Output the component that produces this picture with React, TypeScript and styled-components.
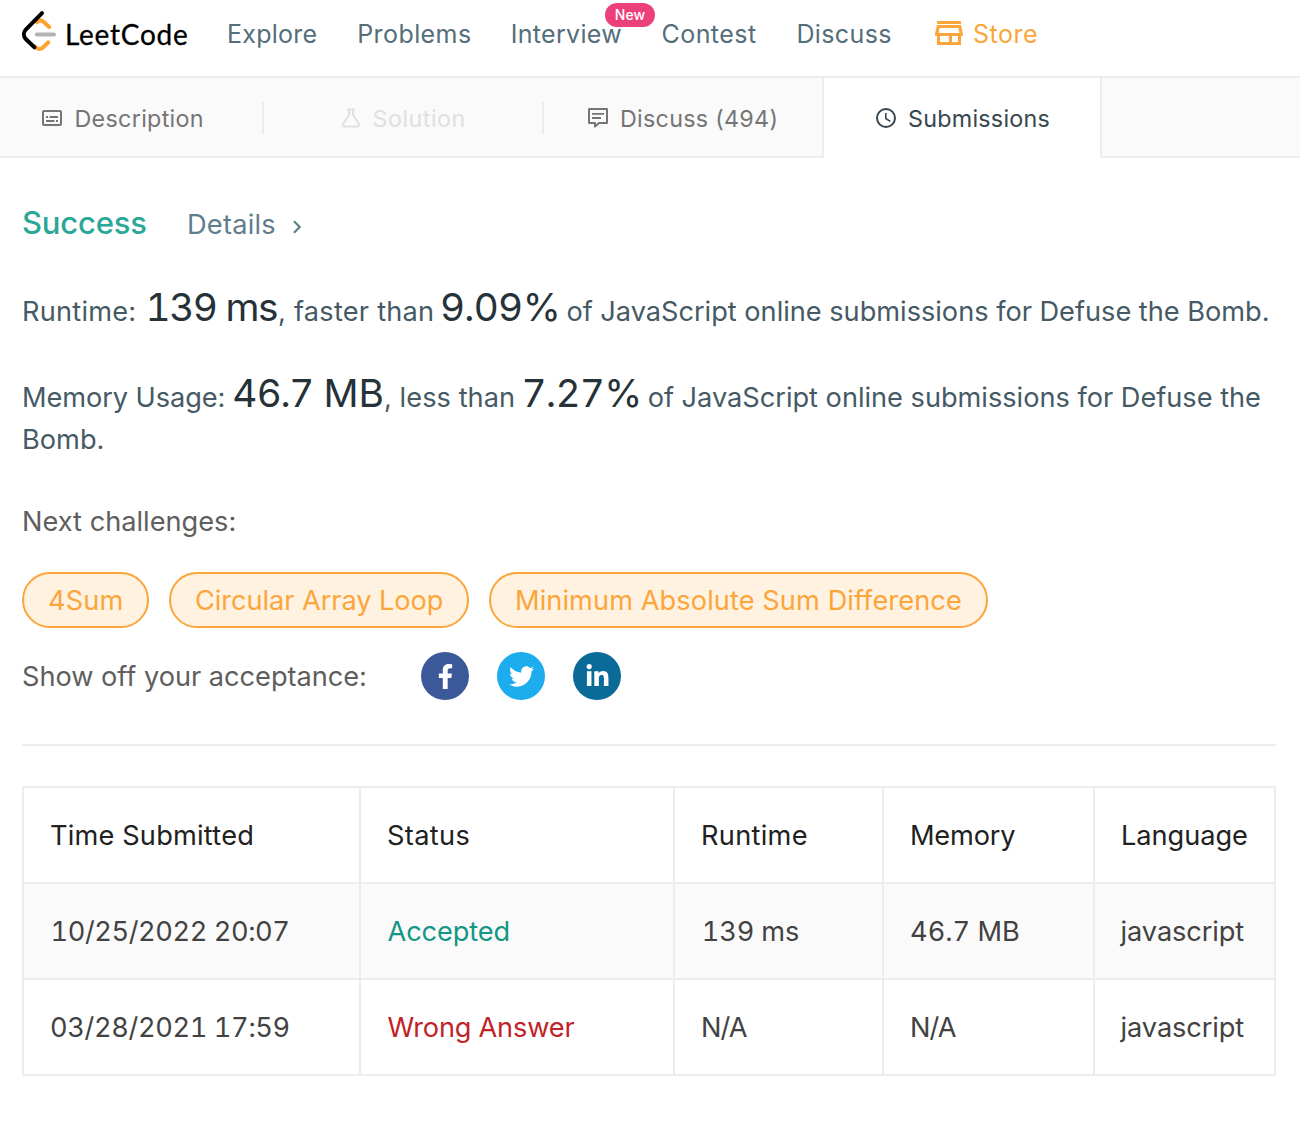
import React from "react";
import styled, { createGlobalStyle } from "styled-components";
import { FaFacebookF, FaLinkedinIn, FaTwitter } from "react-icons/fa";

const line = "#ededed";
const orange = "#fba63b";

const GlobalStyle = createGlobalStyle`
  * { box-sizing: border-box; }
  body {
    margin: 0;
    background: #fff;
    font-family: Inter, "Open Sans", sans-serif;
    font-size: 27.2px;
    line-height: 42px;
    color: #424242;
  }
`;

const Text = styled.span<{ $ls?: number; $shift?: number }>`
  letter-spacing: ${(p) => p.$ls ?? 0}px;
  margin-left: ${(p) => p.$shift ?? 0}px;
`;

/* ---------- header ---------- */

const Header = styled.header`
  display: flex;
  align-items: flex-start;
  height: 78px;
  padding-left: 20px;
  border-bottom: 2px solid ${line};
`;

const Brand = styled.a`
  display: flex;
  align-items: center;
  width: 207px;
  height: 68px;
  gap: 5px;
`;

const Wordmark = styled.span`
  font-family: Lato, sans-serif;
  font-size: 28px;
  letter-spacing: 0.74px;
  color: #000;
  padding-bottom: 1px;
  -webkit-text-stroke: 0.3px #000;
`;

const Nav = styled.nav`
  display: flex;
`;

const NavLink = styled.a<{ $width: number; $ls: number }>`
  position: relative;
  width: ${(p) => p.$width}px;
  font-size: 25px;
  line-height: 68px;
  letter-spacing: ${(p) => p.$ls}px;
  color: #546e7a;
`;

const Badge = styled.span`
  position: absolute;
  left: 94.2px;
  top: 3px;
  width: 50px;
  height: 24px;
  border-radius: 12px;
  background: #ec407a;
  color: #fff;
  font-size: 14px;
  font-weight: 500;
  line-height: 24px;
  letter-spacing: 0.06px;
  text-align: center;
`;

const StoreLink = styled.a`
  display: flex;
  align-items: center;
  gap: 10px;
  font-size: 25px;
  line-height: 68px;
  letter-spacing: 0.5px;
  color: ${orange};
  svg { margin-bottom: 2px; }
`;

/* ---------- tabs ---------- */

const TabBar = styled.div`
  display: flex;
  height: 80px;
`;

const Tab = styled.div<{ $width: number; $pad: number; $gap: number; $color: string; $ls: number; $divider?: boolean }>`
  display: flex;
  align-items: center;
  flex: none;
  width: ${(p) => p.$width}px;
  padding-top: 2px;
  padding-left: ${(p) => p.$pad}px;
  gap: ${(p) => p.$gap}px;
  background: linear-gradient(${line}, ${line}) no-repeat right 24px / ${(p) => (p.$divider ? "2px 32px" : "0 0")} #fafafa;
  background-position: right 0 top 24px;
  border-bottom: 2px solid ${line};
  font-size: 23.3px;
  letter-spacing: ${(p) => p.$ls}px;
  color: ${(p) => p.$color};
`;

const ActiveTab = styled(Tab)`
  background: #fff;
  border: solid ${line};
  border-width: 0 2px;
  padding-bottom: 2px;
`;

const TabFill = styled.div`
  flex: 1;
  background: #fafafa;
  border-bottom: 2px solid ${line};
`;

const TabLabel = styled.span`
  padding-top: 1px;
`;

/* ---------- result ---------- */

const Main = styled.main`
  padding: 44px 24px 0 22px;
`;

const ResultRow = styled.div`
  display: flex;
  align-items: baseline;
  margin-bottom: 45px;
`;

const Success = styled.span`
  width: 165px;
  font-size: 31px;
  font-weight: 500;
  letter-spacing: -0.18px;
  color: #2ba797;
`;

const Details = styled.a`
  display: flex;
  align-items: center;
  gap: 16px;
  letter-spacing: 0.22px;
  color: #607d8b;
  svg { margin-top: 3px; }
`;

const Sentence = styled.p`
  margin: 0 0 44px;
  color: #455a64;
`;

const Big = styled(Text)<{ $tabular?: boolean }>`
  font-size: 38.8px;
  line-height: 0;
  color: #263238;
  font-variant-numeric: ${(p) => (p.$tabular ? "tabular-nums" : "normal")};
`;

const Label = styled.div`
  margin-top: -4px;
  color: #5e5e5e;
`;

const Pills = styled.div`
  display: flex;
  gap: 20px;
  margin-top: 29px;
`;

const Pill = styled.a<{ $width: number; $ls: number }>`
  width: ${(p) => p.$width}px;
  height: 56px;
  padding-left: 24px;
  border: 2px solid ${orange};
  border-radius: 28px;
  background: #fff2e1;
  color: ${orange};
  line-height: 54px;
  letter-spacing: ${(p) => p.$ls}px;
  white-space: nowrap;
`;

const Share = styled.div`
  display: flex;
  align-items: center;
  height: 48px;
  margin-top: 24px;
  color: #5e5e5e;
`;

const ShareLabel = styled.span`
  width: 399px;
  padding-top: 2px;
  letter-spacing: -0.03px;
`;

const Social = styled.a<{ $bg: string }>`
  display: flex;
  align-items: center;
  justify-content: center;
  width: 48px;
  height: 48px;
  margin-right: 28px;
  border-radius: 50%;
  background: ${(p) => p.$bg};
  color: #fff;
`;

const Rule = styled.hr`
  height: 2px;
  margin: 44px 0 40px;
  border: 0;
  background: ${line};
`;

/* ---------- table ---------- */

const Table = styled.div`
  border: solid ${line};
  border-width: 2px 2px 0 2px;
`;

const Row = styled.div<{ $shaded?: boolean }>`
  display: grid;
  grid-template-columns: 337px 314px 209px 211px 1fr;
  height: 96px;
  border-bottom: 2px solid ${line};
  background: ${(p) => (p.$shaded ? "#fafafa" : "#fff")};
`;

const Cell = styled.div<{ $color?: string; $ls?: number; $pad?: number }>`
  padding: 2px 0 0 ${(p) => p.$pad ?? 26}px;
  border-right: 2px solid ${line};
  line-height: 92px;
  font-variant-numeric: tabular-nums;
  white-space: nowrap;
  letter-spacing: ${(p) => p.$ls ?? 0}px;
  color: ${(p) => p.$color ?? "#424242"};
  &:last-child { border-right: 0; }
`;

/* ---------- icons ---------- */

const Logo = () => (
  <svg width="40" height="50" viewBox="20 9 40 50" fill="none" strokeWidth="4" strokeLinecap="round">
    <path d="M37 22.2c2-2.2 4.2-2.3 6.2-.6l6 5.3M35 46.700c2.800 2.900 6 2.900 8.400 .4l4.900-4.800" stroke="#ffa12b" />
    <path d="M36.8 34.6H54" stroke="#b3b3b3" />
    <path d="M42 13.2 26 29.4c-2.8 2.9-2.8 7 0 9.9l8.4 8" stroke="#000" />
  </svg>
);

const StoreIcon = () => (
  <svg width="28" height="26" viewBox="935 20 28 26" fill={orange}>
    <path d="M937 21h24v3h-24z" />
    <path fillRule="evenodd" d="M937 25h24l1.8 8.500v2.500H961v9h-24v-9h-1.900v-2.500zM939.600 28l-1 5h20.800l-1-5zM940 36v6h9v-6zM952 36v6h6v-6z" />
  </svg>
);

const DescriptionIcon = () => (
  <svg width="20" height="16" viewBox="0 0 20 16" fill="currentColor">
    <rect x="1" y="1" width="18" height="14" rx="1" fill="none" stroke="currentColor" strokeWidth="2" />
    <path d="M4 6h2v2H4zM7.500 6H16v2H7.500zM4 10h8.500v2H4zM14 10h2v2h-2z" />
  </svg>
);

const FlaskIcon = () => (
  <svg width="18" height="20" viewBox="0 0 18 20" fill="none" stroke="currentColor" strokeWidth="2" strokeLinejoin="round">
    <path d="M5 1.500h8M7 1v6L1.300 15.800c-.7 1.300 0 2.700 1.500 2.700h12.400c1.500 0 2.200-1.400 1.500-2.700L11 7V1" />
  </svg>
);

const CommentIcon = () => (
  <svg width="20" height="20" viewBox="0 0 20 20" fill="none" stroke="currentColor" strokeWidth="2" strokeLinejoin="round">
    <path d="M1 1h18v14h-8l-4 3.600V15H1z" />
    <path d="M4 5.800h12M4 10h9" strokeWidth="1.800" />
  </svg>
);

const ClockIcon = () => (
  <svg width="20" height="20" viewBox="0 0 20 20" fill="none" stroke="currentColor" strokeWidth="2">
    <circle cx="10" cy="10" r="9" />
    <path d="M9.800 5v5.600l4.500 2.700" strokeWidth="1.600" />
  </svg>
);

const Chevron = () => (
  <svg width="10" height="14" viewBox="0 0 10 14" fill="none" stroke="currentColor" strokeWidth="2.200">
    <path d="M2 1.200 7.700 7 2 12.800" />
  </svg>
);

export default function App() {
  return (
    <div>
      <GlobalStyle />
      <Header>
        <Brand><Logo /><Wordmark>LeetCode</Wordmark></Brand>
        <Nav>
          <NavLink $width={130.2} $ls={0.25}>Explore</NavLink>
          <NavLink $width={153.6} $ls={0.42}>Problems</NavLink>
          <NavLink $width={150.7} $ls={0.3}>Interview<Badge>New</Badge></NavLink>
          <NavLink $width={135} $ls={0.46}>Contest</NavLink>
          <NavLink $width={138.5} $ls={0.36}>Discuss</NavLink>
          <StoreLink><StoreIcon />Store</StoreLink>
        </Nav>
      </Header>
      <TabBar>
        <Tab $width={264} $pad={42} $gap={12.5} $color="#757575" $ls={0.3} $divider><DescriptionIcon /><TabLabel>Description</TabLabel></Tab>
        <Tab $width={280} $pad={78} $gap={12.5} $color="#e0e0e0" $ls={0.5} $divider><FlaskIcon /><TabLabel>Solution</TabLabel></Tab>
        <Tab $width={278} $pad={44} $gap={12} $color="#757575" $ls={0.28}><CommentIcon /><TabLabel>Discuss (494)</TabLabel></Tab>
        <ActiveTab $width={280} $pad={52} $gap={12} $color="#37474f" $ls={0.25}><ClockIcon /><TabLabel>Submissions</TabLabel></ActiveTab>
        <TabFill />
      </TabBar>
      <Main>
        <ResultRow>
          <Success>Success</Success>
          <Details>Details<Chevron /></Details>
        </ResultRow>
        <Sentence>
          <Text $ls={0.22}>Runtime:</Text> <Big $tabular $ls={-1.5} $shift={1.5}>139 ms</Big>
          <Text $ls={0.22} $shift={1.2}>, faster than</Text> <Big $ls={0.1} $shift={-1.5}>9.09%</Big>{" "}
          <Text $ls={-0.02} $shift={-2.2}>of JavaScript online submissions for Defuse the Bomb.</Text>
        </Sentence>
        <Sentence>
          <Text $ls={-0.08}>Memory Usage:</Text> <Big $ls={0.02} $shift={-0.8}>46.7 MB</Big>
          <Text $ls={0.05} $shift={0}>, less than</Text> <Big $tabular $ls={-0.8} $shift={-1.3}>7.27%</Big>{" "}
          <Text $ls={-0.02} $shift={-1.5}>of JavaScript online submissions for Defuse the</Text>{" "}
          <Text>Bomb.</Text>
        </Sentence>
        <Label>Next challenges:</Label>
        <Pills>
          <Pill $width={127} $ls={0.1}>4Sum</Pill>
          <Pill $width={300} $ls={-0.07}>Circular Array Loop</Pill>
          <Pill $width={499} $ls={0.08}>Minimum Absolute Sum Difference</Pill>
        </Pills>
        <Share>
          <ShareLabel>Show off your acceptance:</ShareLabel>
          <Social $bg="#3b5998"><FaFacebookF size={25} /></Social>
          <Social $bg="#1daced"><FaTwitter size={25} /></Social>
          <Social $bg="#0a6b99"><FaLinkedinIn size={25} /></Social>
        </Share>
        <Rule />
        <Table>
          <Row>
            <Cell $color="#212121" $ls={0.22}>Time Submitted</Cell>
            <Cell $color="#212121" $ls={0.36}>Status</Cell>
            <Cell $color="#212121" $ls={0.3}>Runtime</Cell>
            <Cell $color="#212121" $ls={-0.2}>Memory</Cell>
            <Cell $color="#212121" $ls={-0.05}>Language</Cell>
          </Row>
          <Row $shaded>
            <Cell $ls={-0.42} $pad={26.5}>10/25/2022 20:07</Cell>
            <Cell $color="#149684" $ls={-0.11} $pad={26.5}>Accepted</Cell>
            <Cell $ls={-0.15} $pad={26.7}>139 ms</Cell>
            <Cell>46.7 MB</Cell>
            <Cell $ls={-0.1} $pad={25.6}>javascript</Cell>
          </Row>
          <Row>
            <Cell $ls={-0.37}>03/28/2021 17:59</Cell>
            <Cell $color="#bf2329" $ls={-0.17} $pad={26.5}>Wrong Answer</Cell>
            <Cell $ls={-0.9}>N/A</Cell>
            <Cell $ls={-0.9}>N/A</Cell>
            <Cell $ls={-0.1} $pad={25.6}>javascript</Cell>
          </Row>
        </Table>
      </Main>
    </div>
  );
}
